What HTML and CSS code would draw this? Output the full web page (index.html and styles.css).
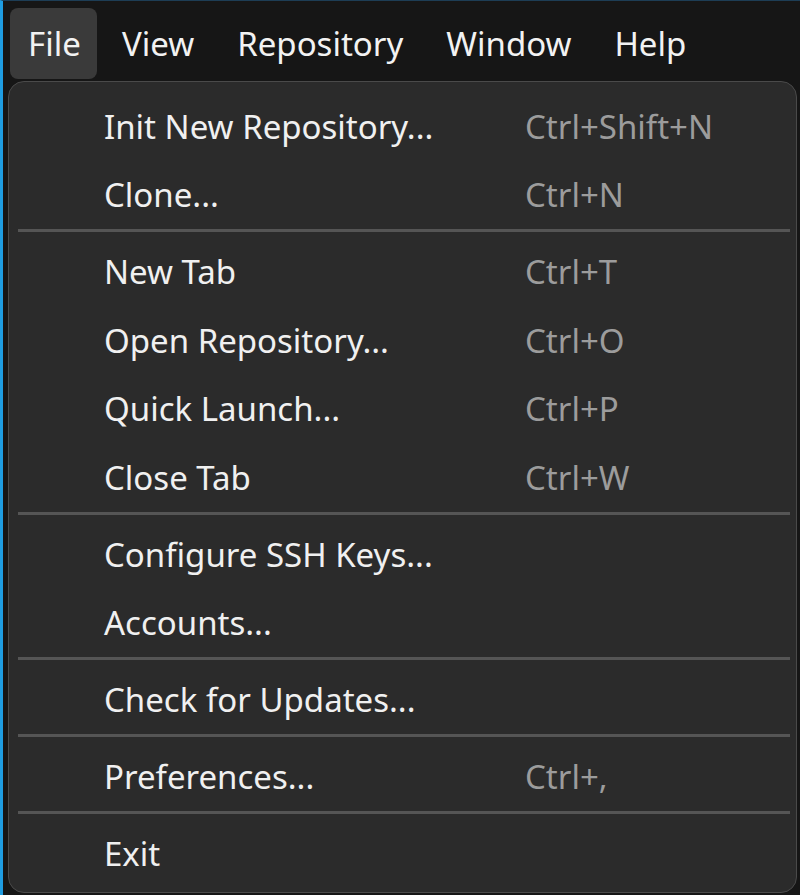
FILE: index.html
```html
<!DOCTYPE html>
<html>
<head>
<meta charset="utf-8">
<link rel="stylesheet" href="styles.css">
</head>
<body>
<div class="app">
  <nav class="menubar">
    <div class="mb-item active">File</div>
    <div class="mb-item">View</div>
    <div class="mb-item">Repository</div>
    <div class="mb-item">Window</div>
    <div class="mb-item">Help</div>
  </nav>
  <div class="menu">
    <div class="row"><span class="label">Init New Repository...</span><span class="key">Ctrl+Shift+N</span></div>
    <div class="row"><span class="label">Clone...</span><span class="key">Ctrl+N</span></div>
    <div class="sep"></div>
    <div class="row"><span class="label">New Tab</span><span class="key">Ctrl+T</span></div>
    <div class="row"><span class="label">Open Repository...</span><span class="key">Ctrl+O</span></div>
    <div class="row"><span class="label">Quick Launch...</span><span class="key">Ctrl+P</span></div>
    <div class="row"><span class="label">Close Tab</span><span class="key">Ctrl+W</span></div>
    <div class="sep"></div>
    <div class="row"><span class="label">Configure SSH Keys...</span><span class="key"></span></div>
    <div class="row"><span class="label">Accounts...</span><span class="key"></span></div>
    <div class="sep"></div>
    <div class="row"><span class="label">Check for Updates...</span><span class="key"></span></div>
    <div class="sep"></div>
    <div class="row"><span class="label">Preferences...</span><span class="key">Ctrl+,</span></div>
    <div class="sep"></div>
    <div class="row"><span class="label">Exit</span><span class="key"></span></div>
  </div>
</div>
</body>
</html>
```
FILE: styles.css
```css
html, body {
  margin: 0;
  padding: 0;
  height: 100%;
  background: #161616;
  overflow: hidden;
}
body {
  font-family: "Noto Sans", "Open Sans", sans-serif;
}
.app {
  height: 895px;
  box-sizing: border-box;
  border-left: 3px solid #1f9de2;
  border-top: 1px solid #1d3d55;
  background: #161616;
}
.menubar {
  display: flex;
  align-items: center;
  height: 71px;
  padding: 7px 0 0 7px;
  gap: 7px;
}
.mb-item {
  color: #f2f2f2;
  font-size: 33px;
  height: 71px;
  line-height: 72px;
  padding: 0 18px;
  border-radius: 8px;
  box-sizing: border-box;
}
.mb-item.active {
  background: #3a3a3a;
  width: 87px;
}
.menu {
  margin: 2px 3px 0 5px;
  height: 812px;
  box-sizing: border-box;
  background: #2b2b2b;
  border: 1px solid #4a4a4a;
  border-radius: 16px;
  padding: 10px 6px 0 9px;
}
.row {
  display: flex;
  align-items: center;
  height: 68.5px;
  font-size: 33px;
}
.label {
  color: #f0f0f0;
  width: 421px;
  padding-left: 86px;
  flex: none;
}
.key {
  color: #9c9c9c;
}
.sep {
  height: 8.5px;
  box-sizing: border-box;
  border-top: 3px solid #555555;
}
```
